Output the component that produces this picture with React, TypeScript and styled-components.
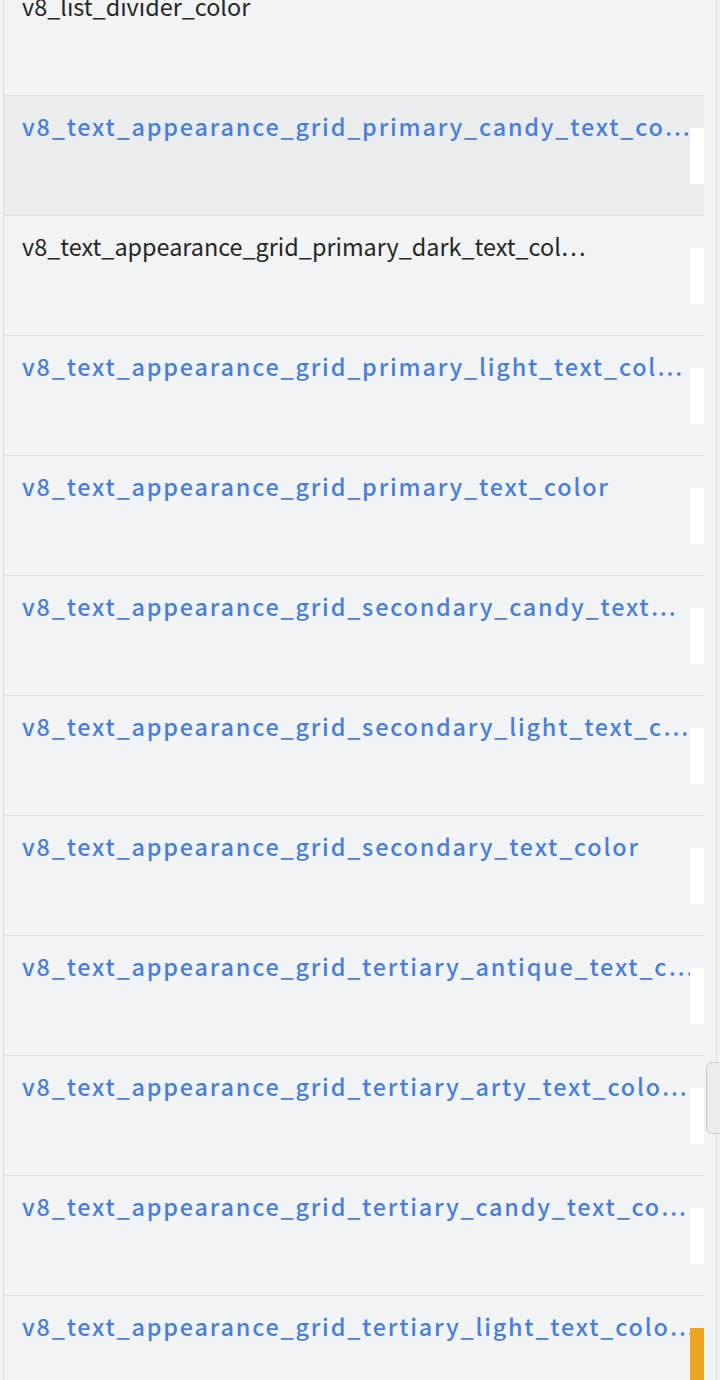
import React from "react";
import styled, { createGlobalStyle } from "styled-components";

const Global = createGlobalStyle`
  html, body { margin: 0; padding: 0; background: #f2f3f5; }
  body { width: 720px; height: 1380px; overflow: hidden; }
`;

const Screen = styled.div`
  width: 720px;
  height: 1380px;
  display: flex;
  background: #f2f3f5;
  overflow: hidden;
`;

const Gutter = styled.div`
  width: 3px;
  flex: none;
`;

const List = styled.div`
  width: 700px;
  flex: none;
  border-left: 1px solid #dadbde;
  margin-top: -24px;
  display: flex;
  flex-direction: column;
`;

const Row = styled.div<{ $selected?: boolean }>`
  height: 120px;
  box-sizing: border-box;
  flex: none;
  border-bottom: 1px solid #dcdde0;
  background: ${(p) => (p.$selected ? "#ebecee" : "#f2f3f5")};
  display: flex;
  align-items: flex-start;
  padding-left: 18px;
  padding-top: 15px;
  position: relative;
`;

const Label = styled.div<{ $blue?: boolean }>`
  font-family: "Noto Sans CJK SC", "Noto Sans", sans-serif;
  font-size: 23.4px;
  line-height: 30px;
  white-space: nowrap;
  color: ${(p) => (p.$blue ? "#4a7fd8" : "#262626")};
  font-weight: ${(p) => (p.$blue ? 500 : 400)};
  letter-spacing: ${(p) => (p.$blue ? "1.8px" : "0px")};
`;

const Marker = styled.div<{ $orange?: boolean }>`
  position: absolute;
  right: 0;
  top: 32px;
  width: 14px;
  height: 56px;
  background: ${(p) => (p.$orange ? "#eea421" : "#ffffff")};
`;

const Track = styled.div`
  flex: 1;
  position: relative;
  &::after {
    content: "";
    position: absolute;
    left: 12px;
    top: 0;
    bottom: 0;
    width: 1px;
    background: #dfe0e3;
  }
`;

const Thumb = styled.div`
  position: absolute;
  left: 2px;
  top: 1062px;
  width: 20px;
  height: 70px;
  border: 1px solid #c9cacd;
  border-radius: 6px;
  background: #ebecee;
  z-index: 1;
`;

type Item = { text: string; blue: boolean; selected?: boolean; marker?: "white" | "orange" };

const items: Item[] = [
  { text: "v8_list_divider_color", blue: false },
  { text: "v8_text_appearance_grid_primary_candy_text_co…", blue: true, selected: true, marker: "white" },
  { text: "v8_text_appearance_grid_primary_dark_text_col…", blue: false, marker: "white" },
  { text: "v8_text_appearance_grid_primary_light_text_col…", blue: true, marker: "white" },
  { text: "v8_text_appearance_grid_primary_text_color", blue: true, marker: "white" },
  { text: "v8_text_appearance_grid_secondary_candy_text…", blue: true, marker: "white" },
  { text: "v8_text_appearance_grid_secondary_light_text_c…", blue: true, marker: "white" },
  { text: "v8_text_appearance_grid_secondary_text_color", blue: true, marker: "white" },
  { text: "v8_text_appearance_grid_tertiary_antique_text_c…", blue: true, marker: "white" },
  { text: "v8_text_appearance_grid_tertiary_arty_text_colo…", blue: true, marker: "white" },
  { text: "v8_text_appearance_grid_tertiary_candy_text_co…", blue: true, marker: "white" },
  { text: "v8_text_appearance_grid_tertiary_light_text_colo…", blue: true, marker: "orange" },
];

export default function App() {
  return (
    <Screen>
      <Global />
      <Gutter />
      <List>
        {items.map((it, i) => (
          <Row key={i} $selected={it.selected}>
            <Label $blue={it.blue}>{it.text}</Label>
            {it.marker && <Marker $orange={it.marker === "orange"} />}
          </Row>
        ))}
      </List>
      <Track>
        <Thumb />
      </Track>
    </Screen>
  );
}
